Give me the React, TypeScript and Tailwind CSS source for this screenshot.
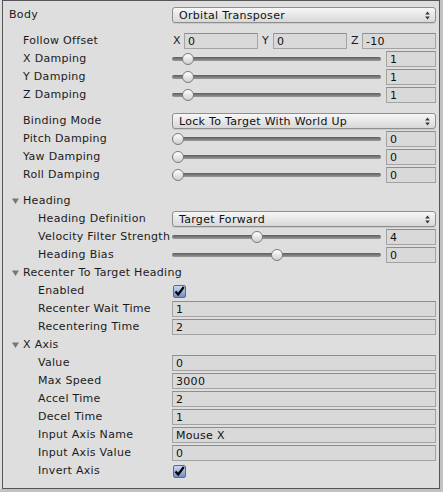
import React from 'react'

const FONT = { fontFamily: '"DejaVu Sans", Verdana, sans-serif' }

function Label({ text, indent }: { text: string; indent: 0 | 1 | 2 }) {
  const pad = indent === 0 ? 'pl-[6px]' : indent === 1 ? 'pl-[20px]' : 'pl-[35px]'
  return <div className={`w-[169px] shrink-0 whitespace-nowrap overflow-hidden ${pad}`}>{text}</div>
}

function Row({ label, indent, children }: { label: string; indent: 0 | 1 | 2; children?: React.ReactNode }) {
  return (
    <div className="flex h-[18px] items-center">
      <Label text={label} indent={indent} />
      <div className="flex flex-1 items-center min-w-0">{children}</div>
    </div>
  )
}

function Field({ value, className = '' }: { value: string; className?: string }) {
  return (
    <div className={`h-[16px] flex items-center pl-[3px] bg-[#d9d9d9] border border-[#a3a3a3] border-t-[#8d8d8d] text-[#111] leading-none ${className}`}>
      {value}
    </div>
  )
}

function Arrows() {
  return (
    <svg width="5" height="9" viewBox="0 0 5 9">
      <path d="M2.5 0.5 L4.8 3.5 L0.2 3.5 Z" fill="#333" />
      <path d="M2.5 8.5 L4.8 5.5 L0.2 5.5 Z" fill="#333" />
    </svg>
  )
}

function Dropdown({ value }: { value: string }) {
  return (
    <div className="flex-1 h-[16px] flex items-center justify-between pl-[6px] pr-[5px] rounded-[3px] border border-[#8e8e8e] bg-gradient-to-b from-[#f7f7f7] to-[#d8d8d8] shadow-[0_1px_0_#c9c9c9] text-[#111] leading-none">
      <span>{value}</span>
      <Arrows />
    </div>
  )
}

function Slider({ value, min, max }: { value: number; min: number; max: number }) {
  const frac = (value - min) / (max - min)
  return (
    <div className="flex flex-1 items-center gap-[5px]">
      <div className="relative flex-1 h-[16px]">
        <div className="absolute left-0 right-0 top-[6px] h-[4px] rounded-full bg-gradient-to-b from-[#5e5e5e] to-[#9a9a9a]" />
        <div
          className="absolute top-[2px] w-[12px] h-[12px] rounded-full border border-[#7b7b7b] bg-gradient-to-b from-[#ffffff] to-[#cfcfcf]"
          style={{ left: `calc(${frac} * (100% - 12px))` }}
        />
      </div>
      <Field value={String(value)} className="w-[50px]" />
    </div>
  )
}

function Check() {
  return (
    <div className="ml-[1px] w-[13px] h-[13px] rounded-[2px] border border-[#5d6c85] bg-gradient-to-b from-[#c9d8f0] to-[#6f8fc4] flex items-center justify-center">
      <svg width="11" height="11" viewBox="0 0 11 11">
        <path d="M1.5 5.5 L4.2 8.5 L9.8 1" stroke="#000" strokeWidth="2.2" fill="none" strokeLinejoin="miter" />
      </svg>
    </div>
  )
}

function Foldout({ label, indent }: { label: string; indent: 0 | 1 }) {
  return (
    <div className={`flex h-[18px] items-center ${indent === 0 ? 'pl-[9px]' : 'pl-[24px]'}`}>
      <svg width="7" height="6" viewBox="0 0 7 6" className="mr-[4px]">
        <path d="M0 0.5 L7 0.5 L3.5 6 Z" fill="#777" />
      </svg>
      <span className="whitespace-nowrap">{label}</span>
    </div>
  )
}

function Vec3() {
  return (
    <div className="flex flex-1 gap-[3px]">
      {[['X', '0'], ['Y', '0'], ['Z', '-10']].map(([a, v]) => (
        <div key={a} className="flex flex-1 items-center">
          <span className="w-[12px] pl-[1px]">{a}</span>
          <Field value={v} className="flex-1" />
        </div>
      ))}
    </div>
  )
}

export default function App() {
  return (
    <div className="flex w-[443px] h-[492px] bg-[#c2c2c2] text-[11px] tracking-[0.3px] text-[#1b1b1b]" style={FONT}>
      <div className="w-[2px] h-[489px] bg-[#dedede]" />
      <div className="w-[438px] h-[489px] border border-[#555555] bg-[#dedede] pt-[5px] pr-[3px]">
        <Row label="Body" indent={0}><Dropdown value="Orbital Transposer" /></Row>
        <div className="h-[8px]" />
        <Row label="Follow Offset" indent={1}><Vec3 /></Row>
        <Row label="X Damping" indent={1}><Slider value={1} min={0} max={20} /></Row>
        <Row label="Y Damping" indent={1}><Slider value={1} min={0} max={20} /></Row>
        <Row label="Z Damping" indent={1}><Slider value={1} min={0} max={20} /></Row>
        <div className="h-[8px]" />
        <Row label="Binding Mode" indent={1}><Dropdown value="Lock To Target With World Up" /></Row>
        <Row label="Pitch Damping" indent={1}><Slider value={0} min={0} max={20} /></Row>
        <Row label="Yaw Damping" indent={1}><Slider value={0} min={0} max={20} /></Row>
        <Row label="Roll Damping" indent={1}><Slider value={0} min={0} max={20} /></Row>
        <div className="h-[8px]" />
        <Foldout label="Heading" indent={0} />
        <Row label="Heading Definition" indent={2}><Dropdown value="Target Forward" /></Row>
        <Row label="Velocity Filter Strength" indent={2}><Slider value={4} min={0} max={10} /></Row>
        <Row label="Heading Bias" indent={2}><Slider value={0} min={-180} max={180} /></Row>
        <Foldout label="Recenter To Target Heading" indent={0} />
        <Row label="Enabled" indent={2}><Check /></Row>
        <Row label="Recenter Wait Time" indent={2}><Field value="1" className="flex-1" /></Row>
        <Row label="Recentering Time" indent={2}><Field value="2" className="flex-1" /></Row>
        <Foldout label="X Axis" indent={0} />
        <Row label="Value" indent={2}><Field value="0" className="flex-1" /></Row>
        <Row label="Max Speed" indent={2}><Field value="3000" className="flex-1" /></Row>
        <Row label="Accel Time" indent={2}><Field value="2" className="flex-1" /></Row>
        <Row label="Decel Time" indent={2}><Field value="1" className="flex-1" /></Row>
        <Row label="Input Axis Name" indent={2}><Field value="Mouse X" className="flex-1" /></Row>
        <Row label="Input Axis Value" indent={2}><Field value="0" className="flex-1" /></Row>
        <Row label="Invert Axis" indent={2}><Check /></Row>
      </div>
    </div>
  )
}
